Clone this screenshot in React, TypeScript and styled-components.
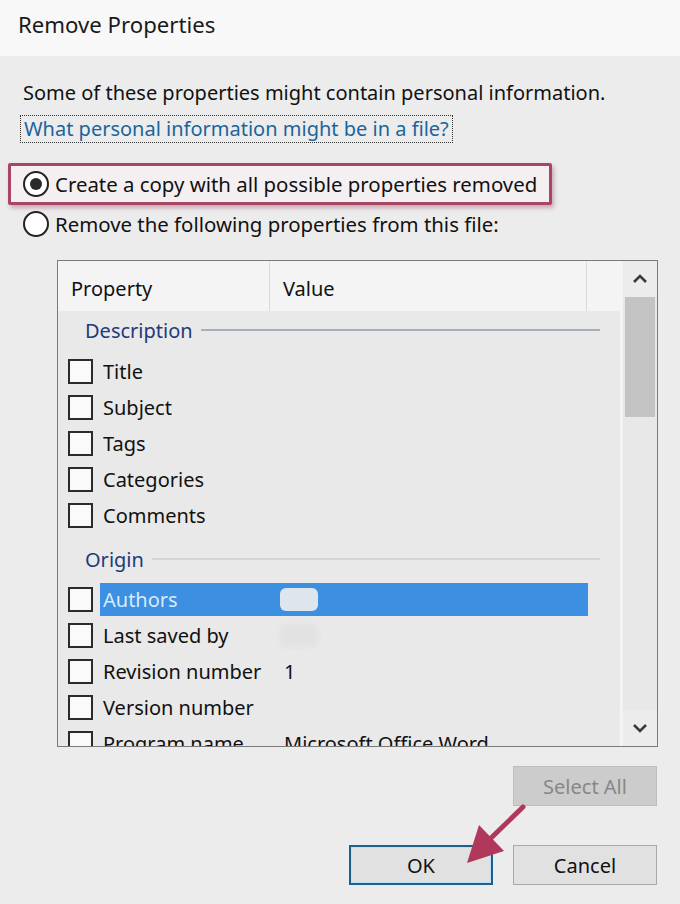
import React from "react";
import styled, { createGlobalStyle } from "styled-components";

const GlobalStyle = createGlobalStyle`
  html, body { margin: 0; padding: 0; background: #ececec; }
  body { font-family: "Noto Sans", "Open Sans", sans-serif; color: #111; }
`;

const Page = styled.div`
  position: relative;
  width: 680px;
  height: 904px;
  overflow: hidden;
  background: #ececec;
  font-size: 20px;
`;

const TitleBar = styled.div`
  height: 56px;
  background: #f8f8f8;
  padding-left: 18px;
  font-size: 22.2px;
  line-height: 50px;
  color: #1a1a1a;
  box-sizing: border-box;
`;

const Body = styled.div`
  display: flex;
  flex-direction: column;
  padding: 22px 23px 0 23px;
`;

const Intro = styled.div`
  line-height: 30px;
  white-space: nowrap;
`;

const Link = styled.span`
  align-self: flex-start;
  margin: 7px 0 0 -3px;
  padding: 0 3px;
  line-height: 26px;
  color: #1c649c;
  border: 1px dotted #333;
`;

const RadioRow = styled.div<{ $highlighted?: boolean }>`
  display: flex;
  align-items: center;
  gap: 6px;
  height: 36px;
  width: fit-content;
  white-space: nowrap;
  font-size: 20.4px;
  ${(p) =>
    p.$highlighted
      ? `
    margin: 20px 0 0 -15px;
    padding: 0 12px 0 12px;
    border: 3px solid #a94663;
    border-radius: 2px;
    background: #f4eff1;
    box-shadow: 2px 3px 4px rgba(150, 90, 110, 0.45);
  `
      : `
    margin: 0;
    height: 38px;
  `}
`;

const Radio = styled.span<{ $checked?: boolean }>`
  width: 22px;
  height: 22px;
  border-radius: 50%;
  border: 2px solid #222;
  background: #fff;
  display: flex;
  align-items: center;
  justify-content: center;
  flex-shrink: 0;
  &::after {
    content: "";
    display: ${(p) => (p.$checked ? "block" : "none")};
    width: 12px;
    height: 12px;
    border-radius: 50%;
    background: #2a2a2a;
  }
`;

const ListBox = styled.div`
  margin: 17px 0 0 34px;
  width: 601px;
  height: 487px;
  border: 1px solid #7a7a7a;
  box-sizing: border-box;
  display: flex;
  background: #f3f3f3;
`;

const ListMain = styled.div`
  flex: 1;
  display: flex;
  flex-direction: column;
  overflow: hidden;
`;

const Header = styled.div`
  height: 50px;
  display: flex;
  background: #f4f4f4;
  flex-shrink: 0;
`;

const HeaderCell = styled.div<{ $width?: number }>`
  width: ${(p) => (p.$width ? `${p.$width}px` : "auto")};
  flex: ${(p) => (p.$width ? "none" : 1)};
  padding: 4px 0 0 13px;
  line-height: 48px;
  box-sizing: border-box;
  border-right: ${(p) => (p.$width ? "1px solid #dadada" : "none")};
`;

const ListBody = styled.div`
  flex: 1;
  overflow: hidden;
  background: #e9e9e9;
  margin-right: 2px;
  border-right: 1px solid #f7f7f7;
`;

const GroupHeader = styled.div<{ $lineColor: string }>`
  display: flex;
  align-items: center;
  height: 36px;
  margin: 8px 0 4px 0;
  padding: 0 20px 0 27px;
  color: #223a7a;
  gap: 8px;
  &:first-child {
    margin-top: 1px;
    margin-bottom: 5px;
  }
  &::after {
    content: "";
    flex: 1;
    height: 2px;
    background: ${(p) => p.$lineColor};
  }
`;

const Row = styled.div`
  display: flex;
  align-items: center;
  height: 36px;
  padding-left: 10px;
  white-space: nowrap;
`;

const CheckBox = styled.span`
  width: 25px;
  height: 25px;
  border: 2px solid #2b2b2b;
  box-sizing: border-box;
  background: #fafafa;
  flex-shrink: 0;
  margin-right: 7px;
`;

const Cells = styled.div<{ $selected?: boolean }>`
  display: flex;
  align-items: center;
  width: 488px;
  height: 33px;
  background: ${(p) => (p.$selected ? "#3d8fe2" : "transparent")};
  color: ${(p) => (p.$selected ? "#d6ecfb" : "#111")};
`;

const NameCell = styled.span`
  width: 180px;
  padding-left: 3px;
  box-sizing: border-box;
`;

const ValueCell = styled.span`
  padding-left: 4px;
  display: flex;
  align-items: center;
`;

const Blur = styled.span<{ $light?: boolean }>`
  display: inline-block;
  width: 38px;
  height: 23px;
  margin-left: -4px;
  border-radius: 6px;
  background: ${(p) => (p.$light ? "#dfe5ec" : "#e2e2e2")};
  filter: blur(${(p) => (p.$light ? 0.5 : 2)}px);
`;

const ScrollBar = styled.div`
  width: 34px;
  display: flex;
  flex-direction: column;
  align-items: center;
  background: #e8e8e8;
`;

const ScrollButton = styled.div`
  width: 100%;
  height: 36px;
  display: flex;
  align-items: center;
  justify-content: center;
  background: #ececec;
  color: #444;
`;

const Thumb = styled.div`
  width: 30px;
  height: 120px;
  background: #c3c3c3;
`;

const Track = styled.div`
  flex: 1;
`;

const ButtonRow = styled.div<{ $top: number }>`
  display: flex;
  justify-content: flex-end;
  gap: 20px;
  margin-top: ${(p) => p.$top}px;
`;

const Button = styled.div<{ $variant?: "default" | "disabled" }>`
  width: 144px;
  height: 40px;
  box-sizing: border-box;
  display: flex;
  align-items: center;
  justify-content: center;
  font-size: 20px;
  background: ${(p) => (p.$variant === "disabled" ? "#cccccc" : "#e1e1e1")};
  color: ${(p) => (p.$variant === "disabled" ? "#878787" : "#111")};
  border: ${(p) =>
    p.$variant === "default"
      ? "2px solid #1f5f8f"
      : p.$variant === "disabled"
      ? "1px solid #bdbdbd"
      : "1px solid #a9a9a9"};
  box-shadow: ${(p) => (p.$variant === "default" ? "inset 0 0 0 1px #bfe0f5" : "none")};
`;

const ArrowOverlay = styled.svg`
  position: absolute;
  left: 0;
  top: 0;
  pointer-events: none;
`;

const Chevron = ({ down }: { down?: boolean }) => (
  <svg width="16" height="10" viewBox="0 0 16 10">
    <path
      d={down ? "M2 2 L8 8 L14 2" : "M2 8 L8 2 L14 8"}
      fill="none"
      stroke="#3a3a3a"
      strokeWidth="2.6"
    />
  </svg>
);

const description = ["Title", "Subject", "Tags", "Categories", "Comments"];

const origin: { name: string; value?: React.ReactNode; selected?: boolean }[] = [
  { name: "Authors", value: <Blur $light />, selected: true },
  { name: "Last saved by", value: <Blur /> },
  { name: "Revision number", value: "1" },
  { name: "Version number" },
  { name: "Program name", value: "Microsoft Office Word" },
];

export default function App() {
  return (
    <Page>
      <GlobalStyle />
      <TitleBar>Remove Properties</TitleBar>
      <Body>
        <Intro>Some of these properties might contain personal information.</Intro>
        <Link>What personal information might be in a file?</Link>
        <RadioRow $highlighted>
          <Radio $checked />
          Create a copy with all possible properties removed
        </RadioRow>
        <RadioRow>
          <Radio />
          Remove the following properties from this file:
        </RadioRow>
        <ListBox>
          <ListMain>
            <Header>
              <HeaderCell $width={212}>Property</HeaderCell>
              <HeaderCell $width={317}>Value</HeaderCell>
              <HeaderCell />
            </Header>
            <ListBody>
              <GroupHeader $lineColor="#a8afbc">Description</GroupHeader>
              {description.map((name) => (
                <Row key={name}>
                  <CheckBox />
                  <Cells>
                    <NameCell>{name}</NameCell>
                  </Cells>
                </Row>
              ))}
              <GroupHeader $lineColor="#d2d5da">Origin</GroupHeader>
              {origin.map((item) => (
                <Row key={item.name}>
                  <CheckBox />
                  <Cells $selected={item.selected}>
                    <NameCell>{item.name}</NameCell>
                    <ValueCell>{item.value}</ValueCell>
                  </Cells>
                </Row>
              ))}
            </ListBody>
          </ListMain>
          <ScrollBar>
            <ScrollButton>
              <Chevron />
            </ScrollButton>
            <Thumb />
            <Track />
            <ScrollButton>
              <Chevron down />
            </ScrollButton>
          </ScrollBar>
        </ListBox>
        <ButtonRow $top={19}>
          <Button $variant="disabled">Select All</Button>
        </ButtonRow>
        <ButtonRow $top={39}>
          <Button $variant="default">OK</Button>
          <Button>Cancel</Button>
        </ButtonRow>
      </Body>
      <ArrowOverlay width="680" height="904" viewBox="0 0 680 904">
        <line x1="523" y1="807" x2="489" y2="840" stroke="#b0395b" strokeWidth="5" strokeLinecap="round" />
        <polygon points="479,825 504,851 467,863" fill="#b0395b" />
      </ArrowOverlay>
    </Page>
  );
}
